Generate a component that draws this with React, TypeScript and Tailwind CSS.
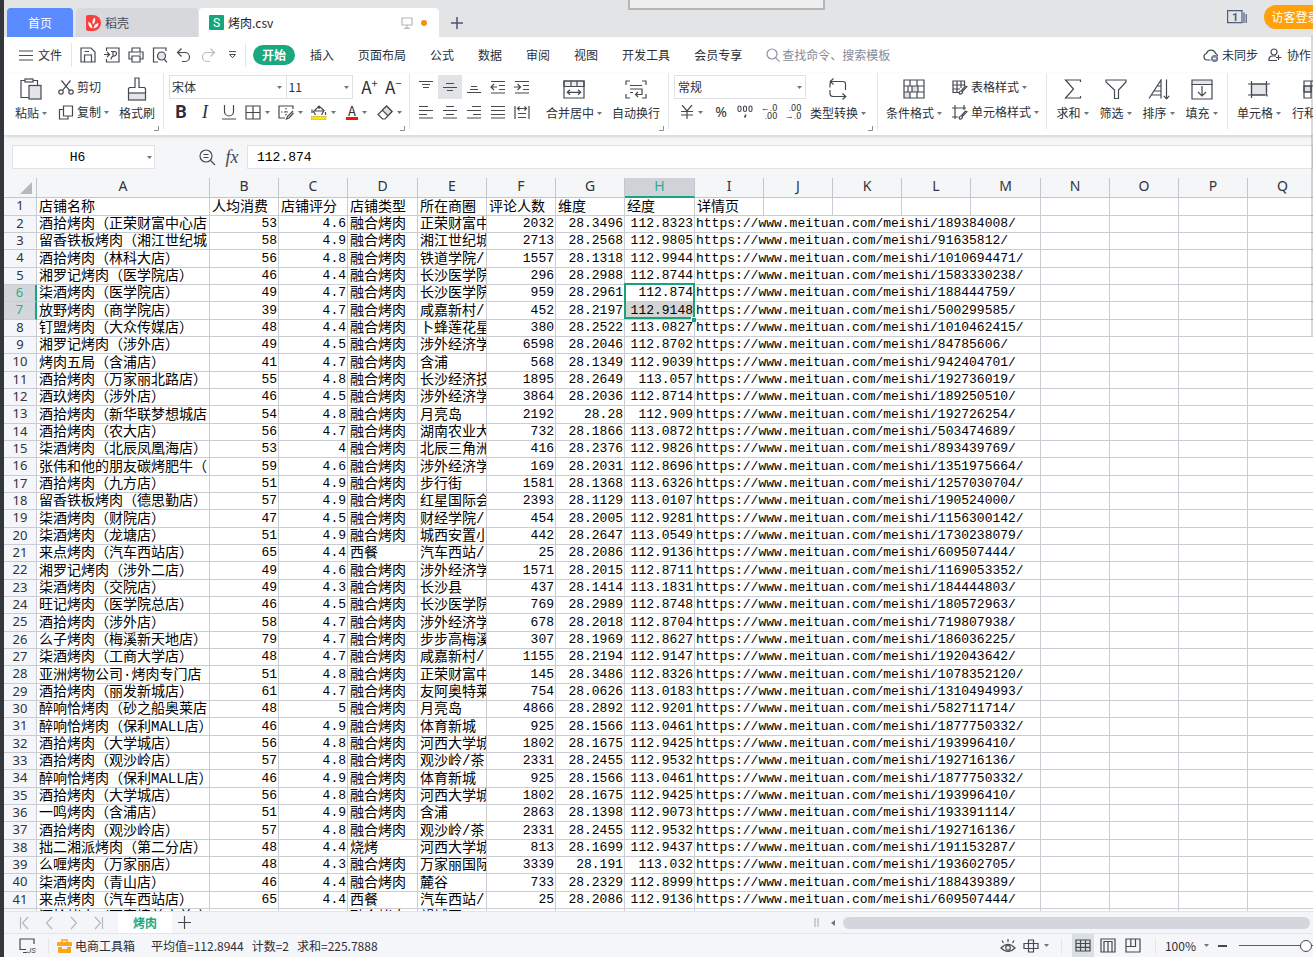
import { useState } from "react"
import type { ReactNode } from "react"
import clsx from "clsx"

type Shop = [string, string, string, string, string, string, string, string, string]

const shops: Shop[] = [
  ["酒拾烤肉（正荣财富中心店", "53", "4.6", "融合烤肉", "正荣财富中", "2032", "28.3496", "112.8323", "189384008"],
  ["留香铁板烤肉（湘江世纪城", "58", "4.9", "融合烤肉", "湘江世纪城", "2713", "28.2568", "112.9805", "91635812"],
  ["酒拾烤肉（林科大店）", "56", "4.8", "融合烤肉", "铁道学院/", "1557", "28.1318", "112.9944", "1010694471"],
  ["湘罗记烤肉（医学院店）", "46", "4.4", "融合烤肉", "长沙医学院", "296", "28.2988", "112.8744", "1583330238"],
  ["柒酒烤肉（医学院店）", "49", "4.7", "融合烤肉", "长沙医学院", "959", "28.2961", "112.874", "188444759"],
  ["放野烤肉（商学院店）", "39", "4.7", "融合烤肉", "咸嘉新村/", "452", "28.2197", "112.9148", "500299585"],
  ["钉盟烤肉（大众传媒店）", "48", "4.4", "融合烤肉", "卜蜂莲花星", "380", "28.2522", "113.0827", "1010462415"],
  ["湘罗记烤肉（涉外店）", "49", "4.5", "融合烤肉", "涉外经济学", "6598", "28.2046", "112.8702", "84785606"],
  ["烤肉五局（含浦店）", "41", "4.7", "融合烤肉", "含浦", "568", "28.1349", "112.9039", "942404701"],
  ["酒拾烤肉（万家丽北路店）", "55", "4.8", "融合烤肉", "长沙经济技", "1895", "28.2649", "113.057", "192736019"],
  ["酒玖烤肉（涉外店）", "46", "4.5", "融合烤肉", "涉外经济学", "3864", "28.2036", "112.8714", "189250510"],
  ["酒拾烤肉（新华联梦想城店", "54", "4.8", "融合烤肉", "月亮岛", "2192", "28.28", "112.909", "192726254"],
  ["酒拾烤肉（农大店）", "56", "4.7", "融合烤肉", "湖南农业大", "732", "28.1866", "113.0872", "503474689"],
  ["柒酒烤肉（北辰凤凰海店）", "53", "4", "融合烤肉", "北辰三角洲", "416", "28.2376", "112.9826", "893439769"],
  ["张伟和他的朋友碳烤肥牛（", "59", "4.6", "融合烤肉", "涉外经济学", "169", "28.2031", "112.8696", "1351975664"],
  ["酒拾烤肉（九方店）", "51", "4.9", "融合烤肉", "步行街", "1581", "28.1368", "113.6326", "1257030704"],
  ["留香铁板烤肉（德思勤店）", "57", "4.9", "融合烤肉", "红星国际会", "2393", "28.1129", "113.0107", "190524000"],
  ["柒酒烤肉（财院店）", "47", "4.5", "融合烤肉", "财经学院/", "454", "28.2005", "112.9281", "1156300142"],
  ["柒酒烤肉（龙塘店）", "51", "4.9", "融合烤肉", "城西安置小", "442", "28.2647", "113.0549", "1730238079"],
  ["来点烤肉（汽车西站店）", "65", "4.4", "西餐", "汽车西站/", "25", "28.2086", "112.9136", "609507444"],
  ["湘罗记烤肉（涉外二店）", "49", "4.6", "融合烤肉", "涉外经济学", "1571", "28.2015", "112.8711", "1169053352"],
  ["柒酒烤肉（交院店）", "49", "4.3", "融合烤肉", "长沙县", "437", "28.1414", "113.1831", "184444803"],
  ["旺记烤肉（医学院总店）", "46", "4.5", "融合烤肉", "长沙医学院", "769", "28.2989", "112.8748", "180572963"],
  ["酒拾烤肉（涉外店）", "58", "4.7", "融合烤肉", "涉外经济学", "678", "28.2018", "112.8704", "719807938"],
  ["么子烤肉（梅溪新天地店）", "79", "4.7", "融合烤肉", "步步高梅溪", "307", "28.1969", "112.8627", "186036225"],
  ["柒酒烤肉（工商大学店）", "48", "4.7", "融合烤肉", "咸嘉新村/", "1155", "28.2194", "112.9147", "192043642"],
  ["亚洲烤物公司·烤肉专门店", "51", "4.8", "融合烤肉", "正荣财富中", "145", "28.3486", "112.8326", "1078352120"],
  ["酒拾烤肉（丽发新城店）", "61", "4.7", "融合烤肉", "友阿奥特莱", "754", "28.0626", "113.0183", "1310494993"],
  ["醉响恰烤肉（砂之船奥莱店", "48", "5", "融合烤肉", "月亮岛", "4866", "28.2892", "112.9201", "582711714"],
  ["醉响恰烤肉（保利MALL店）", "46", "4.9", "融合烤肉", "体育新城", "925", "28.1566", "113.0461", "1877750332"],
  ["酒拾烤肉（大学城店）", "56", "4.8", "融合烤肉", "河西大学城", "1802", "28.1675", "112.9425", "193996410"],
  ["酒拾烤肉（观沙岭店）", "57", "4.8", "融合烤肉", "观沙岭/茶", "2331", "28.2455", "112.9532", "192716136"],
  ["醉响恰烤肉（保利MALL店）", "46", "4.9", "融合烤肉", "体育新城", "925", "28.1566", "113.0461", "1877750332"],
  ["酒拾烤肉（大学城店）", "56", "4.8", "融合烤肉", "河西大学城", "1802", "28.1675", "112.9425", "193996410"],
  ["一鸣烤肉（含浦店）", "51", "4.9", "融合烤肉", "含浦", "2863", "28.1398", "112.9073", "193391114"],
  ["酒拾烤肉（观沙岭店）", "57", "4.8", "融合烤肉", "观沙岭/茶", "2331", "28.2455", "112.9532", "192716136"],
  ["拙二湘派烤肉（第二分店）", "48", "4.4", "烧烤", "河西大学城", "813", "28.1699", "112.9437", "191153287"],
  ["么喱烤肉（万家丽店）", "48", "4.3", "融合烤肉", "万家丽国际", "3339", "28.191", "113.032", "193602705"],
  ["柒酒烤肉（青山店）", "46", "4.4", "融合烤肉", "麓谷", "733", "28.2329", "112.8999", "188439389"],
  ["来点烤肉（汽车西站店）", "65", "4.4", "西餐", "汽车西站/", "25", "28.2086", "112.9136", "609507444"],
  ["酒拾烤肉（万家墙美中美店", "52", "4.8", "融合烤肉", "望城区", "641", "28.2214", "112.9312", "193381207"],
]

const headings = ["店铺名称", "人均消费", "店铺评分", "店铺类型", "所在商圈", "评论人数", "维度", "经度", "详情页"]

const columns = [
  { id: "A", width: "w-[173px]" },
  { id: "B", width: "w-[69px]" },
  { id: "C", width: "w-[69px]" },
  { id: "D", width: "w-[70px]" },
  { id: "E", width: "w-[69px]" },
  { id: "F", width: "w-[69px]" },
  { id: "G", width: "w-[69px]" },
  { id: "H", width: "w-[70px]" },
  { id: "I", width: "w-[69px]" },
  { id: "J", width: "w-[69px]" },
  { id: "K", width: "w-[69px]" },
  { id: "L", width: "w-[69px]" },
  { id: "M", width: "w-[70px]" },
  { id: "N", width: "w-[69px]" },
  { id: "O", width: "w-[69px]" },
  { id: "P", width: "w-[69px]" },
  { id: "Q", width: "w-[70px]" },
]

const numeric = [1, 2, 5, 6, 7]

function Svg({ w, h, children, className }: { w: number; h: number; children: ReactNode; className?: string }) {
  return (
    <svg
      width={w}
      height={h}
      viewBox={`0 0 ${w} ${h}`}
      fill="none"
      stroke="#454950"
      strokeWidth="1.2"
      className={clsx("shrink-0", className)}
      aria-hidden="true"
    >
      {children}
    </svg>
  )
}

function Caret() {
  return (
    <svg width="5" height="3" viewBox="0 0 5 3" className="shrink-0 fill-[#70747c]" aria-hidden="true">
      <path d="M0 0h5L2.5 3z" />
    </svg>
  )
}

function Divider({ className }: { className?: string }) {
  return <div className={clsx("w-px shrink-0 bg-[#e3e5e8]", className)} />
}

function Corner() {
  return (
    <svg width="5" height="5" viewBox="0 0 5 5" fill="none" stroke="#8a8e95" className="absolute right-1 bottom-1">
      <path d="M4.5 0v4.5H0" />
    </svg>
  )
}

const icons = {
  paste: (
    <Svg w={22} h={22}>
      <path d="M5 2.5H1v17h8M13 2.5h4.5V7" />
      <rect x="5" y="1" width="8" height="3" />
      <rect x="9" y="7.5" width="12" height="13.5" fill="#e3e5ea" />
    </Svg>
  ),
  cut: (
    <Svg w={16} h={15}>
      <circle cx="3" cy="12" r="2.2" />
      <circle cx="13" cy="12" r="2.2" />
      <path d="M4.5 10.3 12.5.5M11.5 10.3 3.5.5" />
    </Svg>
  ),
  copy: (
    <Svg w={16} h={15}>
      <path d="M5.500 1h9v10h-9zM5.500 4.500H1.500V14h8.500v-3" />
    </Svg>
  ),
  brush: (
    <Svg w={20} h={24}>
      <rect x="1.5" y="16" width="17" height="7" fill="#e3e5ea" />
      <path d="M1.5 16v-4.500l1-1H8V1h4v9.500h5.500l1 1V16" />
    </Svg>
  ),
  merge: (
    <Svg w={22} h={19}>
      <path d="M1 1h20v5.500H1z" fill="#eceef1" />
      <path d="M1 1h20v17H1zM1 6.500h20M8 1v5.500M14 1v5.500" />
      <path d="M4.500 12.300h13M7 9.800l-2.700 2.500L7 14.800M15 9.800l2.700 2.500-2.700 2.500" />
    </Svg>
  ),
  wrap: (
    <Svg w={22} h={19}>
      <path d="M5 1H1v4M17 1h4v4M5 18H1v-4M17 18h4v-4" />
      <path d="M5 5.500h12M5 9h12v5.500h-6.500M5 12.500h3M13 12l-2.500 2.500L13 17" />
    </Svg>
  ),
  convert: (
    <Svg w={20} h={22}>
      <path d="M2 9.500V6q0-2.500 2.500-2.500H15q2.500 0 2.500 2.500v6M5.500.5l-3.300 3 3.300 3" />
      <path d="M2 12v3.500q0 3 3 3h12.500M14.500 15.500l3.300 3-3.300 3" />
    </Svg>
  ),
  conditional: (
    <Svg w={22} h={20}>
      <path d="M9 7h6v6H9zM1 13h6v6H1z" fill="#dcdfe4" stroke="none" />
      <path d="M1 1h20v18H1zM1 7h20M1 13h20M7 1v6M14 1v6M5 7v6M9 7v6M15 7v6M7 13v6M14 13v6" />
    </Svg>
  ),
  tableStyle: (
    <Svg w={16} h={15}>
      <path d="M7 12.500H1V1h11.500v5M1 5h11.500M1 9h7M5 1v11.500M9 1v7" />
      <path d="m14.800 6.800-4.500 4.700-1-.9 4-4.300zM9 11q-2.500.5-1.500 3 3 .3 3-2.500" />
    </Svg>
  ),
  cellStyle: (
    <Svg w={16} h={15}>
      <path d="M0 3h14M3 0v14M12 0v5M0 12h6" />
      <path d="m14.800 6.800-4.500 4.700-1-.9 4-4.300zM9 11q-2.500.5-1.500 3 3 .3 3-2.500" />
    </Svg>
  ),
  sum: (
    <Svg w={18} h={20}>
      <path d="M16.500 3V1H1.500l8 9-8 9h15v-2" />
    </Svg>
  ),
  filter: (
    <Svg w={22} h={21}>
      <path d="M1 1h20v2l-7.500 8v8.500h-4V11L1 3z" />
    </Svg>
  ),
  sort: (
    <Svg w={22} h={21}>
      <path d="M1 19.500 13 1v18.500M9.500 7H13M6 12h7M3 16h10" />
      <path d="M18.500.5v19M15.800 16.800l2.700 3 2.700-3" />
    </Svg>
  ),
  fill: (
    <Svg w={22} h={21}>
      <path d="M1 1h20v4.500H1z" fill="#e3e5ea" />
      <path d="M1 5.500h20V20H1zM11 7v10M7 13l4 4 4-4" />
    </Svg>
  ),
  cells: (
    <Svg w={24} h={19}>
      <path d="M4.500 4h15v11h-15z" fill="#e3e5ea" />
      <path d="M1 4h22M1 15h17M4.500 1v17M19.500 1v11M20 14.500v2" />
    </Svg>
  ),
  rowsCols: (
    <Svg w={22} h={19}>
      <path d="M1 6h7v6H1z" fill="#dcdfe4" />
      <path d="M1 1h20v5H8v12H1zM1 6h7M1 12h7M8 1v5M14 1v5" />
    </Svg>
  ),
  border: (
    <Svg w={16} h={15}>
      <path d="M1 1h14v13H1zM8 1v13M1 7.500h14" />
    </Svg>
  ),
  drawBorder: (
    <Svg w={16} h={15}>
      <path d="M7 13H1V1h14v3" />
      <path d="M3 7h7M8 3v8" strokeDasharray="1.5 1.5" />
      <path d="m15 6-5.500 5.500-1 2.500 2.500-1L15.500 8" />
    </Svg>
  ),
  fillColor: (
    <Svg w={16} h={15}>
      <path d="M4.500 10 2.500 6.500 8 1l5 4.500L10.500 10M2.500 6h10.500M8 1v3M1 4.500V8M14.500 7v3" />
      <rect x="0" y="11.5" width="15" height="3.5" fill="#ffe600" stroke="#b9ad3a" strokeWidth="0.6" />
    </Svg>
  ),
  eraser: (
    <Svg w={16} h={15}>
      <path d="m9.500 1 5.500 5.500-7 7.500H5.500L1 9.500z" />
      <path d="m9.500 1 5.500 5.500-4 4.200L5.300 5.200z" fill="#dcdfe4" />
    </Svg>
  ),
}

function BigButton({ icon, label, width, caret }: { icon: ReactNode; label: string; width: string; caret?: boolean }) {
  return (
    <button className={clsx("flex shrink-0 flex-col items-center gap-[2px]", width)}>
      <span className="flex h-7 items-center">{icon}</span>
      <span className="flex items-center gap-[3px] whitespace-nowrap">
        {label}
        {caret && <Caret />}
      </span>
    </button>
  )
}

function SmallButton({ icon, label, caret }: { icon: ReactNode; label: string; caret?: boolean }) {
  return (
    <button className="flex h-6 items-center gap-[3px] whitespace-nowrap">
      {icon}
      {label}
      {caret && <Caret />}
    </button>
  )
}

function ToolButton({ label, width, active, children }: { label: string; width: string; active?: boolean; children: ReactNode }) {
  return (
    <button
      aria-label={label}
      className={clsx("flex h-6 shrink-0 items-center justify-center gap-1", width, active && "bg-[#e1e3e7]")}
    >
      {children}
    </button>
  )
}

function Lines({ d }: { d: string }) {
  return (
    <Svg w={16} h={14}>
      <path d={d} />
    </Svg>
  )
}

const alignTop = [
  { label: "顶端对齐", d: "M1 1.500h14M4 4.500h8M5 7.500h6" },
  { label: "垂直居中", d: "M4 3.500h8M1 7.500h14M5 10.500h6" },
  { label: "底端对齐", d: "M5 6.500h6M4 9.500h8M1 12.500h14" },
  { label: "减少缩进", d: "M1 1.500h14M9 5.500h6M9 9.500h6M1 13h14M1 7h6M4 4 1 7l3 3" },
  { label: "增加缩进", d: "M1 1.500h14M9 5.500h6M9 9.500h6M1 13h14M0 7h6M3.500 4l3 3-3 3" },
]

const alignBottom = [
  { label: "左对齐", d: "M1 1.500h9M1 5.500h14M1 9.500h8M1 13h14" },
  { label: "水平居中", d: "M4 1.500h8M1 5.500h14M4 9.500h8M1 13h14" },
  { label: "右对齐", d: "M6 1.500h9M1 5.500h14M7 9.500h8M1 13h14" },
  { label: "两端对齐", d: "M1 1.500h14M1 5.500h14M1 9.500h14M1 13h14" },
  { label: "分散对齐", d: "M1 1v13M15 1v13M4 8.500h8M4 12.500h8M4 3.500h8M5.500 1.500l-2 2 2 2M10.500 1.500l2 2-2 2" },
]

function TitleBar() {
  return (
    <header className="flex h-[37px] shrink-0 items-end bg-[#e2e4e6]">
      <button className="ml-[3px] h-[29px] w-[66px] shrink-0 rounded-t-sm bg-[#5a8bff] text-white">首页</button>
      <button className="ml-[3px] flex h-[29px] w-[122px] shrink-0 items-center gap-1 rounded-t-sm bg-[#d6d8db] pl-[10px] text-[#454a5a]">
        <svg width="15" height="16" viewBox="0 0 15 16" aria-hidden="true">
          <path d="M0 2Q0 0 2 0h5a8 8 0 0 1 0 16H2q-2 0-2-2z" fill="#f8413c" />
          <path
            d="M6.300 13.500C3 12 2 9.500 2.300 7c2.500.8 4 3 4 6.500zM6.800 9.500C5.800 6.500 6.800 4 8.800 2.500c1 2.500.5 5-2 7zM7.500 13.500c.3-3 2-5 5-5.500 0 3-2 5-5 5.500z"
            fill="#fff"
          />
        </svg>
        稻壳
      </button>
      <div className="ml-px flex h-[29px] w-[240px] shrink-0 items-center rounded-t-sm bg-white pr-3 pl-[10px] text-[#1f2329]">
        <span className="mr-1 flex size-[15px] items-center justify-center rounded-[1px] bg-[#12a77c] font-['Roboto',sans-serif] text-xs text-white">
          S
        </span>
        烤肉.csv
        <Svg w={12} h={12} className="ml-auto">
          <g stroke="#b4b7bb">
            <path d="M1 1h10v7H1zM6 8v3M3 11.300h6" />
          </g>
        </Svg>
        <span className="ml-2 size-[6px] rounded-full bg-[#ee960c]" />
      </div>
      <button aria-label="新建" className="flex h-[29px] w-9 shrink-0 items-center justify-center">
        <Svg w={12} h={12}>
          <path d="M6 0v12M0 6h12" stroke="#4a5375" strokeWidth="1.5" />
        </Svg>
      </button>
      <div className="-mr-[14px] ml-auto flex h-full shrink-0 items-start pt-[5px]">
        <div className="flex h-6 items-center">
          <Svg w={20} h={14}>
            <g stroke="#525c7d">
              <path d="M.6.600h14.400v12H.6zM17 2.500v10.500M19.200 4v9" />
            </g>
            <text x="5" y="11" fill="#525c7d" stroke="none" fontSize="11" fontWeight="700" fontFamily="Roboto, sans-serif">
              1
            </text>
          </Svg>
          <Divider className="mx-2 h-5 bg-[#ced0d4]" />
        </div>
        <button className="h-6 w-[63px] rounded-full bg-[#ffa10a] text-white">访客登录</button>
      </div>
    </header>
  )
}

const menus = ["插入", "页面布局", "公式", "数据", "审阅", "视图", "开发工具", "会员专享"]

function MenuBar() {
  return (
    <nav className="flex h-9 shrink-0 items-center bg-white">
      <button className="ml-[15px] flex shrink-0 items-center gap-[5px]">
        <Svg w={14} h={11}>
          <path d="M0 1h14M0 5.500h14M0 10h14" />
        </Svg>
        文件
      </button>
      <Divider className="ml-[9px] h-6" />
      <div className="ml-1 flex shrink-0 items-center">
        <ToolButton label="保存" width="w-6">
          <Svg w={16} h={16}>
            <path d="M1 1h10l4 4v10H1zM4.500 15V8h7v7M4.500 4.500H9" />
          </Svg>
        </ToolButton>
        <ToolButton label="输出为PDF" width="w-6">
          <Svg w={16} h={16}>
            <path d="M2.500 4V1H15v14H2.500v-3M0 7.500h5M3 5l2.500 2.500L3 10M7 4.500h3.500q2 0 2 2t-2 2.300q-3 0-3.500 3.700M9 4.500v4" />
          </Svg>
        </ToolButton>
        <ToolButton label="打印" width="w-6">
          <Svg w={16} h={16}>
            <path d="M4 5V1h8v4M4 12H1V5h14v7h-3M4 9h8v6H4zM11.500 7h1.500" />
          </Svg>
        </ToolButton>
        <ToolButton label="打印预览" width="w-6">
          <Svg w={16} h={16}>
            <path d="M6 15H1.500V1H14v3" />
            <circle cx="9.500" cy="9" r="4" fill="#e3e5ea" />
            <path d="m12 12 3 3.300" />
          </Svg>
        </ToolButton>
        <ToolButton label="撤销" width="w-6">
          <Svg w={16} h={16}>
            <path d="M5.500 1.500 1.500 5.500l4 4M1.500 5.500H9a4.500 4.500 0 0 1 0 9H6" />
          </Svg>
        </ToolButton>
        <ToolButton label="恢复" width="w-6">
          <Svg w={16} h={16}>
            <path d="m10.500 1.500 4 4-4 4M14.500 5.500H7a4.500 4.500 0 0 0 0 9h3" stroke="#b9bcc1" />
          </Svg>
        </ToolButton>
        <ToolButton label="自定义快速访问工具栏" width="w-6">
          <Svg w={9} h={8}>
            <path d="M1 .6h7M1.500 3.500h6l-3 3.200z" strokeWidth="1" />
          </Svg>
        </ToolButton>
      </div>
      <Divider className="ml-px h-6" />
      <button className="ml-[7px] h-5 w-[42px] shrink-0 rounded-full bg-[#1aa880] font-bold text-white">开始</button>
      <div className="ml-[15px] flex shrink-0 items-center gap-6">
        {menus.map((m) => (
          <button key={m}>{m}</button>
        ))}
        <label className="flex items-center gap-[2px]">
          <Svg w={14} h={14}>
            <g stroke="#8b91a5">
              <circle cx="6" cy="6" r="5" />
              <path d="m9.600 9.600 4 4" />
            </g>
          </Svg>
          <input
            aria-label="查找命令"
            className="w-32 outline-none placeholder:text-[#858a9c]"
            placeholder="查找命令、搜索模板"
          />
        </label>
      </div>
      <div className="mr-[2px] ml-auto flex shrink-0 items-center gap-[10px]">
        <button className="flex items-center gap-[3px]">
          <Svg w={16} h={14}>
            <path d="M7.500 12H4a3.300 3.300 0 0 1-.5-6.500 4.700 4.700 0 0 1 9 0 3 3 0 0 1 2 2.500" />
            <circle cx="11.500" cy="10.500" r="3" fill="#8b94b3" stroke="#6d7696" />
            <path d="M10 10.500h3" stroke="#fff" />
          </Svg>
          未同步
        </button>
        <button className="flex items-center gap-[5px]">
          <Svg w={14} h={14}>
            <circle cx="6" cy="4" r="3" />
            <path d="M9 12.500H1q-.5-4 3-4.500h4M10.500 7v5M8 9.500h5.500" />
          </Svg>
          协作
        </button>
      </div>
    </nav>
  )
}

function Ribbon() {
  return (
    <div className="flex h-[63px] shrink-0 border-b border-[#dcdee2] bg-white shadow-sm">
      <div className="relative flex w-[159px] shrink-0 pt-[2px]">
        <BigButton icon={icons.paste} label="粘贴" width="w-[54px]" caret />
        <div className="flex w-[55px] flex-col gap-px">
          <SmallButton icon={icons.cut} label="剪切" />
          <SmallButton icon={icons.copy} label="复制" caret />
        </div>
        <BigButton icon={icons.brush} label="格式刷" width="w-[48px]" />
        <Corner />
      </div>
      <Divider className="h-14" />
      <div className="relative w-[245px] shrink-0 pt-[2px] pl-[5px]">
        <div className="flex h-6 items-center">
          <div className="relative h-6 w-[118px] border border-[#dfe1e5]">
            <select aria-label="字体" className="h-full w-full appearance-none pl-[2px] outline-none">
              <option>宋体</option>
            </select>
            <span className="pointer-events-none absolute top-[10px] right-1">
              <Caret />
            </span>
          </div>
          <div className="relative -ml-px h-6 w-[68px] border border-[#dfe1e5]">
            <select aria-label="字号" className="h-full w-full appearance-none pl-[2px] outline-none">
              <option>11</option>
            </select>
            <span className="pointer-events-none absolute top-[10px] right-[3px]">
              <Caret />
            </span>
          </div>
          <button aria-label="增大字号" className="ml-2 flex w-6 items-start text-[17px] leading-5">
            A<span className="text-[11px] leading-3">+</span>
          </button>
          <button aria-label="减小字号" className="flex w-6 items-start text-[17px] leading-5">
            A<span className="text-[11px] leading-3">−</span>
          </button>
        </div>
        <div className="mt-px flex h-6 items-center">
          <ToolButton label="加粗" width="w-6">
            <b className="font-['Roboto',sans-serif] text-lg leading-5">B</b>
          </ToolButton>
          <ToolButton label="倾斜" width="w-6">
            <i className="font-['Liberation_Serif',serif] text-lg leading-5">I</i>
          </ToolButton>
          <ToolButton label="下划线" width="w-6">
            <Svg w={14} h={15}>
              <path d="M2.500 0v6.500a4.500 4.500 0 0 0 9 0V0M0 14h14" />
            </Svg>
          </ToolButton>
          <ToolButton label="边框" width="w-[33px]">
            {icons.border}
            <Caret />
          </ToolButton>
          <ToolButton label="绘制边框" width="w-[33px]">
            {icons.drawBorder}
            <Caret />
          </ToolButton>
          <ToolButton label="填充颜色" width="w-[33px]">
            {icons.fillColor}
            <Caret />
          </ToolButton>
          <ToolButton label="字体颜色" width="w-[33px]">
            <span className="flex h-[15px] flex-col items-center border-b-3 border-[#f4140c] px-[2px] text-[13px] leading-3">
              A
            </span>
            <Caret />
          </ToolButton>
          <ToolButton label="清除" width="w-[33px]">
            {icons.eraser}
            <Caret />
          </ToolButton>
        </div>
        <Corner />
      </div>
      <Divider className="h-14" />
      <div className="relative flex w-[258px] shrink-0 pt-[2px] pl-1">
        <div className="flex w-[128px] flex-col gap-px">
          <div className="flex">
            {alignTop.map((a, i) => (
              <ToolButton key={a.label} label={a.label} width="w-6" active={i === 1}>
                <Lines d={a.d} />
              </ToolButton>
            ))}
          </div>
          <div className="flex">
            {alignBottom.map((a) => (
              <ToolButton key={a.label} label={a.label} width="w-6">
                <Lines d={a.d} />
              </ToolButton>
            ))}
          </div>
        </div>
        <BigButton icon={icons.merge} label="合并居中" width="w-[64px]" caret />
        <BigButton icon={icons.wrap} label="自动换行" width="w-[60px]" />
        <Corner />
      </div>
      <Divider className="h-14" />
      <div className="relative flex w-[208px] shrink-0 pt-[2px] pl-[5px]">
        <div className="flex w-[132px] shrink-0 flex-col gap-px">
          <div className="relative h-6 border border-[#dfe1e5]">
            <select aria-label="数字格式" className="h-full w-full appearance-none pl-[3px] outline-none">
              <option>常规</option>
            </select>
            <span className="pointer-events-none absolute top-[10px] right-[3px]">
              <Caret />
            </span>
          </div>
          <div className="flex">
            <ToolButton label="货币" width="w-[35px]">
              <Svg w={14} h={14}>
                <path d="m2 0 5 6 5-6M7 6v8M1 6.500h12M1 10h12" />
              </Svg>
              <Caret />
            </ToolButton>
            <ToolButton label="百分比" width="w-6">
              <span className="font-['Noto_Sans',sans-serif] text-sm">%</span>
            </ToolButton>
            <ToolButton label="千位分隔" width="w-6">
              <Svg w={16} h={14}>
                <g strokeWidth="1.1">
                  <rect x="1" y="1" width="3" height="5.500" rx="1.500" />
                  <rect x="6.500" y="1" width="3" height="5.500" rx="1.500" />
                  <rect x="12" y="1" width="3" height="5.500" rx="1.500" />
                  <path d="M8.500 9.500v1.500l-1 1.500" strokeWidth="1.600" />
                </g>
              </Svg>
            </ToolButton>
            <ToolButton label="增加小数位" width="w-6">
              <span className="flex flex-col items-end font-['Roboto',sans-serif] text-[9px] leading-2">
                <span>←.0</span>
                <span>.00</span>
              </span>
            </ToolButton>
            <ToolButton label="减少小数位" width="w-6">
              <span className="flex flex-col items-end font-['Roboto',sans-serif] text-[9px] leading-2">
                <span>.00</span>
                <span>→.0</span>
              </span>
            </ToolButton>
          </div>
        </div>
        <BigButton icon={icons.convert} label="类型转换" width="w-[64px]" caret />
        <Corner />
      </div>
      <Divider className="h-14" />
      <div className="flex w-[168px] shrink-0 gap-[6px] pt-[2px] pl-1">
        <BigButton icon={icons.conditional} label="条件格式" width="w-[64px]" caret />
        <div className="flex flex-col gap-px">
          <SmallButton icon={icons.tableStyle} label="表格样式" caret />
          <SmallButton icon={icons.cellStyle} label="单元格样式" caret />
        </div>
      </div>
      <Divider className="h-14" />
      <div className="flex w-[180px] shrink-0 pt-[2px] pl-1">
        <BigButton icon={icons.sum} label="求和" width="w-[43px]" caret />
        <BigButton icon={icons.filter} label="筛选" width="w-[43px]" caret />
        <BigButton icon={icons.sort} label="排序" width="w-[43px]" caret />
        <BigButton icon={icons.fill} label="填充" width="w-[43px]" caret />
      </div>
      <Divider className="h-14" />
      <div className="flex shrink-0 pt-[2px]">
        <BigButton icon={icons.cells} label="单元格" width="w-[62px]" caret />
        <BigButton icon={icons.rowsCols} label="行和列" width="w-[48px]" caret />
      </div>
    </div>
  )
}

function FormulaBar({ value, onChange }: { value: string; onChange: (v: string) => void }) {
  return (
    <div className="flex h-[42px] shrink-0 items-center pl-2 font-['Liberation_Mono',monospace] text-[13px] text-black">
      <div className="relative h-6 w-[143px] shrink-0 border border-[#e0e2e6] bg-white">
        <input aria-label="名称框" defaultValue="H6" className="h-full w-full pr-3 text-center outline-none" />
        <span className="absolute top-[10px] right-[2px]">
          <Caret />
        </span>
      </div>
      <button aria-label="查找" className="ml-11">
        <Svg w={17} h={17}>
          <circle cx="7" cy="7" r="6" />
          <path d="m11.500 11.500 4.500 4.500M4.500 5.500h5M4.500 8.500h5" />
        </Svg>
      </button>
      <button
        aria-label="插入函数"
        className="ml-2 w-4 font-['Liberation_Serif',serif] text-lg leading-5 text-[#454950] italic"
      >
        fx
      </button>
      <input
        aria-label="编辑栏"
        value={value}
        onChange={(e) => onChange(e.target.value)}
        className="ml-[7px] h-6 min-w-0 flex-1 border border-[#e0e2e6] bg-white pl-[9px] outline-none"
      />
    </div>
  )
}

function Sheet() {
  return (
    <div className="min-h-0 flex-1 overflow-hidden">
      <table className="w-[1213px] table-fixed border-separate border-spacing-0 text-black">
        <colgroup>
          <col className="w-[33px]" />
          {columns.map((c) => (
            <col key={c.id} className={c.width} />
          ))}
        </colgroup>
        <thead>
          <tr className="h-5 font-['Noto_Sans',sans-serif] text-sm leading-4 text-[#30343c]">
            <th className="border-r border-b border-[#c3c6cc] p-0">
              <svg width="12" height="12" viewBox="0 0 12 12" className="mr-1 ml-auto fill-[#b5b8bd]" aria-hidden="true">
                <path d="M12 0v12H0z" />
              </svg>
            </th>
            {columns.map((c) => (
              <th
                key={c.id}
                className={clsx(
                  "border-r p-0 align-top font-normal",
                  c.id === "H"
                    ? "border-b-2 border-r-[#c3c6cc] border-b-[#17a67d] bg-[#cfd2d8] text-[#2fae8c]"
                    : "border-b border-[#c3c6cc]",
                )}
              >
                {c.id}
              </th>
            ))}
          </tr>
        </thead>
        <tbody className="bg-white font-['Liberation_Mono','Noto_Sans_CJK_SC',monospace] leading-4">
          <tr className="h-[18px]">
            <RowHead n={1} />
            {columns.map((c, i) => (
              <td
                key={c.id}
                className="overflow-hidden border-r border-b border-[#c9ccd3] p-0 pl-[2px] text-sm leading-4 whitespace-nowrap"
              >
                {headings[i]}
              </td>
            ))}
          </tr>
          {shops.map((shop, r) => (
            <tr key={r} className={r % 3 === 2 ? "h-[18px]" : "h-[17px]"}>
              <RowHead n={r + 2} />
              {shop.slice(0, 8).map((value, i) => {
                const selected = i === 7 && (r === 4 || r === 5)
                return (
                  <td
                    key={i}
                    className={clsx(
                      "border-r border-b border-[#c9ccd3] p-0 whitespace-nowrap",
                      numeric.includes(i)
                        ? "pr-px text-right text-[13px] leading-4"
                        : "overflow-hidden pl-[2px] text-sm leading-4",
                      selected && "relative",
                      selected && r === 5 && "bg-[#d4d4d4]",
                    )}
                  >
                    {value}
                    {selected && r === 4 && (
                      <>
                        <span className="absolute -top-[2px] -right-px -left-px z-10 h-9 border-2 border-[#1aa37b]" />
                        <span className="absolute top-8 -right-[2px] z-10 size-[5px] border-t border-l border-white bg-[#1aa37b]" />
                      </>
                    )}
                  </td>
                )
              })}
              <td
                colSpan={5}
                className="border-r border-b border-[#c9ccd3] p-0 pl-px text-[13px] leading-4 whitespace-nowrap"
              >
                https://www.meituan.com/meishi/{shop[8]}/
              </td>
              {columns.slice(13).map((c) => (
                <td key={c.id} className="border-r border-b border-[#c9ccd3] p-0" />
              ))}
            </tr>
          ))}
        </tbody>
      </table>
    </div>
  )
}

function RowHead({ n }: { n: number }) {
  const active = n === 6 || n === 7
  return (
    <th
      className={clsx(
        "border-b p-0 align-top font-['Noto_Sans',sans-serif] text-[13px] leading-[14px] font-normal",
        active
          ? "border-r-2 border-r-[#17a67d] border-b-[#c9ccd3] bg-[#d3d6da] text-[#2fae8c]"
          : "border-r border-[#c9ccd3] bg-[#f4f6f9] text-[#30343c]",
      )}
    >
      {n}
    </th>
  )
}

const navIcons = [
  { label: "第一张", d: "M1.500 1v12M9 1 3.500 7 9 13" },
  { label: "上一张", d: "M8 1 2.500 7 8 13" },
  { label: "下一张", d: "m2 1 5.500 6L2 13" },
  { label: "最后一张", d: "M1 1l5.500 6L1 13M8.500 1v12" },
]

function SheetTabs() {
  return (
    <div className="flex h-[22px] shrink-0 items-center border-t border-[#e3e5e9] bg-[#f4f5f8]">
      <div className="ml-[7px] flex shrink-0">
        {navIcons.map((n) => (
          <button key={n.label} aria-label={n.label} className="flex w-[25px] justify-center">
            <Svg w={10} h={14}>
              <path d={n.d} stroke="#b4b7bd" />
            </Svg>
          </button>
        ))}
      </div>
      <button className="ml-[7px] h-full w-[54px] shrink-0 bg-white font-bold text-[#1fa981]">烤肉</button>
      <button aria-label="新建工作表" className="ml-1 flex w-4 shrink-0 justify-center">
        <Svg w={13} h={13}>
          <path d="M6.500 0v13M0 6.500h13" />
        </Svg>
      </button>
      <div className="ml-auto flex w-[499px] items-center">
        <Svg w={5} h={9}>
          <path d="M1 0v9M4 0v9" stroke="#a4a7ae" strokeWidth="1" />
        </Svg>
        <svg width="4" height="6" viewBox="0 0 4 6" className="mr-2 ml-3 shrink-0 fill-[#70747c]" aria-hidden="true">
          <path d="M4 0v6L0 3z" />
        </svg>
        <div className="mr-[3px] h-3 flex-1 rounded-full bg-[#d3d6dd]" />
      </div>
    </div>
  )
}

function StatusBar() {
  return (
    <footer className="flex h-6 shrink-0 items-center border-t border-[#e3e5e9] bg-[#f5f6f9]">
      <button aria-label="宏" className="ml-[15px] shrink-0">
        <Svg w={18} h={16}>
          <path d="M7 11.500H1V1h14v5M4 14.500h4" />
          <text x="8" y="14.500" fill="#454950" stroke="none" fontSize="8" fontStyle="italic" fontFamily="Roboto, sans-serif">
            JS
          </text>
        </Svg>
      </button>
      <Divider className="ml-[11px] h-4" />
      <button className="ml-2 flex shrink-0 items-center gap-[3px]">
        <svg width="15" height="14" viewBox="0 0 15 14" aria-hidden="true">
          <path d="M5 3V1h5v2" fill="none" stroke="#fba519" strokeWidth="1.5" />
          <path d="M1 3h13q1 0 1 1v3H0V4q0-1 1-1zM1 8h4v2h5V8h4v5q0 1-1 1H2q-1 0-1-1z" fill="#fba519" />
        </svg>
        电商工具箱
      </button>
      <div className="ml-4 flex shrink-0 gap-2">
        <span>平均值=112.8944</span>
        <span>计数=2</span>
        <span>求和=225.7888</span>
      </div>
      <div className="-mr-[60px] ml-auto flex h-full shrink-0 items-center">
        <button aria-label="护眼模式">
          <Svg w={16} h={14}>
            <path d="M1 9q7-7.500 14 0-7 7-14 0zM8 3V0M3.500 4 2 1.500M12.500 4 14 1.500" />
            <circle cx="8" cy="8.700" r="2.300" />
          </Svg>
        </button>
        <button aria-label="阅读模式" className="ml-[7px] flex items-center gap-[5px]">
          <Svg w={16} h={14}>
            <path d="M5.500 1h5v12h-5zM1 4.500h14v5H1z" />
          </Svg>
          <Caret />
        </button>
        <Divider className="ml-3 h-4" />
        <button aria-label="普通视图" className="ml-[10px] flex h-full w-[22px] items-center justify-center bg-[#dadee5]">
          <Svg w={16} h={13}>
            <path d="M1 1h14v11H1zM1 4.500h14M1 8.300h14M5.500 1v11M10.500 1v11" />
          </Svg>
        </button>
        <button aria-label="页面布局" className="ml-[6px]">
          <Svg w={16} h={15}>
            <path d="M1 1h14v13H1zM4 3.500h8v10.500H4zM8 3.500V14" />
          </Svg>
        </button>
        <button aria-label="分页预览" className="ml-[9px]">
          <Svg w={16} h={15}>
            <path d="M1 1h14v13H1zM1 8.500h9.500V1M5.800 1v7.500" />
          </Svg>
        </button>
        <Divider className="ml-[14px] h-4" />
        <button className="ml-[9px] flex items-center gap-2">
          100%
          <Caret />
        </button>
        <button aria-label="缩小" className="ml-[9px] h-[2px] w-[9px] bg-[#454950]" />
        <input
          type="range"
          aria-label="显示比例"
          defaultValue={50}
          className="ml-3 h-px w-[134px] appearance-none bg-[#5b5f66] [&::-webkit-slider-thumb]:size-3 [&::-webkit-slider-thumb]:appearance-none [&::-webkit-slider-thumb]:rounded-full [&::-webkit-slider-thumb]:border [&::-webkit-slider-thumb]:border-[#454950] [&::-webkit-slider-thumb]:bg-white"
        />
      </div>
    </footer>
  )
}

export default function App() {
  const [formula, setFormula] = useState("112.874")

  return (
    <div className="relative flex h-screen overflow-hidden bg-[#33363a] pl-1 font-['Noto_Sans_CJK_SC',sans-serif] text-xs leading-4 text-[#2b2f36]">
      <main className="flex min-w-0 flex-1 flex-col overflow-hidden bg-[#f5f6f8]">
        <TitleBar />
        <MenuBar />
        <Ribbon />
        <FormulaBar value={formula} onChange={setFormula} />
        <Sheet />
        <SheetTabs />
        <StatusBar />
      </main>
      <div className="absolute top-0 left-[628px] h-[10px] w-[197px] border-2 border-t-0 border-[#b5b6b8] bg-[#eeeeef]" />
      <div className="absolute top-9 right-0 h-[300px] w-[2px] bg-black/15" />
    </div>
  )
}
